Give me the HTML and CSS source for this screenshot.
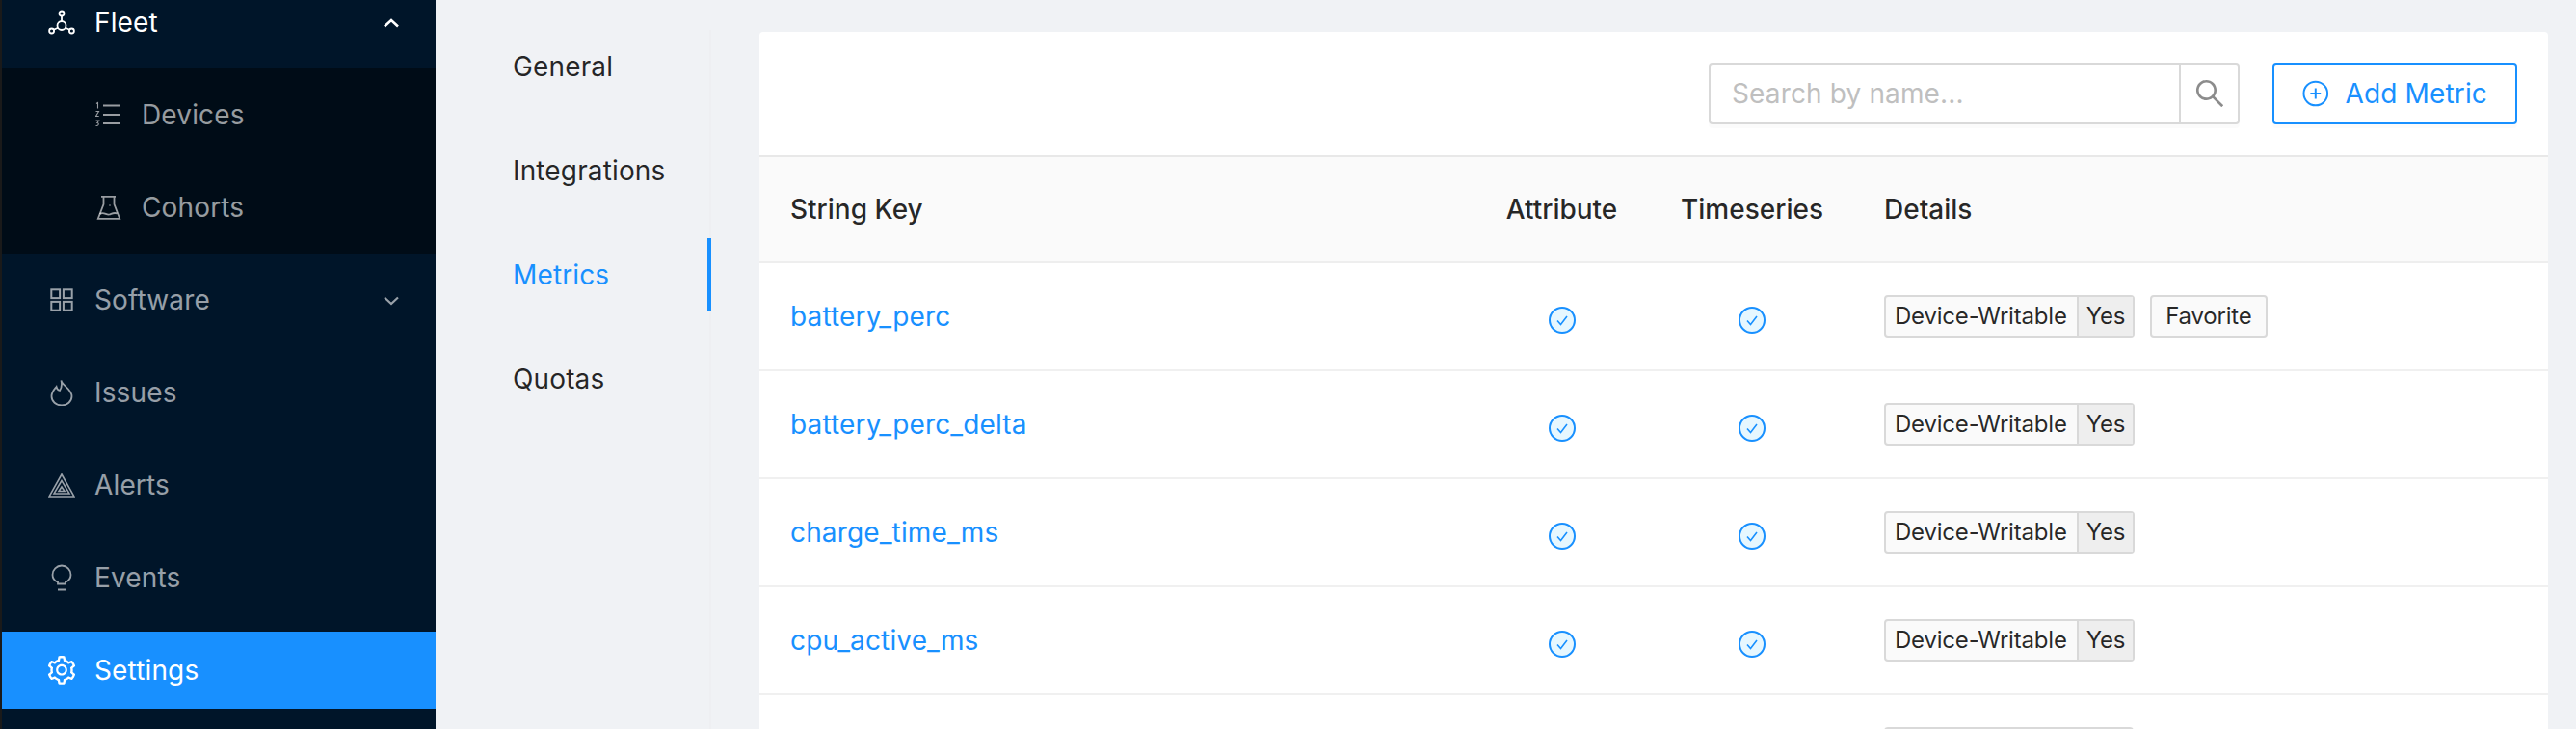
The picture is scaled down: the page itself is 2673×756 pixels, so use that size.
FILE: index.html
```html
<!DOCTYPE html>
<html lang="en">

<head>
    <meta charset="UTF-8">
    <title>Metrics</title>
    <link rel="stylesheet" href="styles.css">
</head>

<body>
    <div class="sidebar">
        <ul class="menu">
            <li class="item open">
                <svg class="ico" viewBox="0 0 28 28" fill="none" stroke="currentColor" stroke-width="1.8">
                    <circle cx="14" cy="5" r="2.5"/>
                    <circle cx="14" cy="17.5" r="4.5"/>
                    <circle cx="3.6" cy="23" r="2.5"/>
                    <circle cx="24.4" cy="23" r="2.5"/>
                    <path d="M14 7.5v5.500M10 19.800l-4.200 2M18 19.800l4.200 2"/>
                </svg>
                <span>Fleet</span>
                <svg class="arrow" viewBox="0 0 16 10" fill="none" stroke="currentColor" stroke-width="2.600"><path d="M1 8.500l7-6.500 7 6.500"/></svg>
            </li>
            <li>
                <ul class="sub">
                    <li class="item">
                        <svg class="ico" viewBox="0 0 28 28" fill="none" stroke="currentColor" stroke-width="1.800">
                            <path d="M8 4.500h18M8 14h18M8 23h18"/>
                            <path stroke-width="1.100" d="M1 2.500l1.500-1v6M.500 10.500h3l-3 5h3.200M.500 20h3.200l-1.800 2.500c2 0 2 3.500-1.400 3"/>
                        </svg>
                        <span>Devices</span>
                    </li>
                    <li class="item">
                        <svg class="ico" viewBox="0 0 28 28" fill="none" stroke="currentColor" stroke-width="1.800">
                            <path d="M6 2.800h15M8.500 2.800v8L2.800 25.800h22.400L19.500 10.800v-8"/>
                            <path d="M4.500 21c4-3 7 1.500 10 .5s5-2.500 8-1"/>
                            <circle cx="15" cy="12" r=".8" fill="currentColor" stroke="none"/>
                        </svg>
                        <span>Cohorts</span>
                    </li>
                </ul>
            </li>
            <li class="item">
                <svg class="ico" viewBox="0 0 28 28" fill="none" stroke="currentColor" stroke-width="2">
                    <rect x="3.300" y="3.300" width="8.800" height="8.800"/>
                    <rect x="15.900" y="3.300" width="8.800" height="8.800"/>
                    <rect x="3.300" y="15.900" width="8.800" height="8.800"/>
                    <rect x="15.900" y="15.900" width="8.800" height="8.800"/>
                </svg>
                <span>Software</span>
                <svg class="arrow" viewBox="0 0 16 10" fill="none" stroke="currentColor" stroke-width="2.200"><path d="M1 1.500l7 6.500 7-6.500"/></svg>
            </li>
            <li class="item">
                <svg class="ico" viewBox="0 0 28 28" fill="none" stroke="currentColor" stroke-width="1.800">
                    <path d="M13.500 1.500C14 6.500 24.500 10 24.500 18a10.500 9.500 0 0 1-21 0C3.500 13.500 6.500 10.500 8.500 8c.500 2.500 1.500 3.500 3.500 4 2-3 2.500-6.500 1.500-10.500z"/>
                </svg>
                <span>Issues</span>
            </li>
            <li class="item">
                <svg class="ico" viewBox="0 0 28 28" fill="none" stroke="currentColor" stroke-width="1.600">
                    <path d="M14 3L1 26h26z"/>
                    <path d="M14 9.500L6 23h16z"/>
                    <path d="M14 16l-3 4.500h6z"/>
                </svg>
                <span>Alerts</span>
            </li>
            <li class="item">
                <svg class="ico" viewBox="0 0 28 28" fill="none" stroke="currentColor" stroke-width="1.800">
                    <path d="M10 20.500v-1.800c-3.500-1.500-5.500-4.500-5.500-7.700a9.500 9.500 0 0 1 19 0c0 3.200-2 6.200-5.500 7.700v1.800z"/>
                    <path d="M10 26.500h8" stroke-width="2"/>
                </svg>
                <span>Events</span>
            </li>
            <li class="item active">
                <svg class="ico ico-lg" viewBox="0 0 1024 1024" fill="currentColor">
                    <path d="M924.8 625.7l-65.5-56c3.100-19 4.700-38.400 4.700-57.800s-1.600-38.800-4.700-57.800l65.500-56a32.030 32.030 0 0 0 9.300-35.200l-.9-2.600a443.740 443.740 0 0 0-79.700-137.900l-1.800-2.100a32.120 32.120 0 0 0-35.100-9.500l-81.300 28.900c-30-24.600-63.500-44-99.700-57.600l-15.700-85a32.050 32.050 0 0 0-25.800-25.700l-2.700-.5c-52.100-9.400-106.900-9.400-159 0l-2.700.5a32.050 32.050 0 0 0-25.800 25.700l-15.800 85.400a351.860 351.860 0 0 0-99 57.400l-81.900-29.100a32 32 0 0 0-35.100 9.500l-1.800 2.100a446.020 446.020 0 0 0-79.700 137.900l-.9 2.600c-4.500 12.500-.8 26.500 9.300 35.200l66.300 56.600c-3.100 18.800-4.600 38-4.600 57.100 0 19.200 1.500 38.400 4.600 57.100L99 625.500a32.030 32.030 0 0 0-9.300 35.200l.9 2.600c18.100 50.400 44.900 96.900 79.700 137.900l1.800 2.100a32.120 32.120 0 0 0 35.100 9.500l81.900-29.100c29.800 24.500 63.100 43.900 99 57.400l15.800 85.400a32.050 32.050 0 0 0 25.800 25.700l2.700.5a449.400 449.400 0 0 0 159 0l2.700-.5a32.050 32.050 0 0 0 25.800-25.700l15.700-85a350 350 0 0 0 99.700-57.600l81.300 28.900a32 32 0 0 0 35.100-9.500l1.800-2.100c34.800-41.100 61.600-87.500 79.700-137.900l.9-2.600c4.500-12.300.8-26.300-9.300-35zM788.300 465.900c2.500 15.100 3.800 30.600 3.800 46.100s-1.300 31-3.800 46.100l-6.600 40.100 74.700 63.900a370.030 370.030 0 0 1-42.600 73.600L721 702.800l-31.400 25.800c-23.900 19.600-50.500 35-79.300 45.800l-38.100 14.300-17.900 97a377.500 377.500 0 0 1-85 0l-17.900-97.200-37.800-14.500c-28.500-10.800-55-26.200-78.700-45.700l-31.400-25.900-93.400 33.200c-17-22.900-31.200-47.600-42.600-73.600l75.500-64.500-6.500-40c-2.400-14.900-3.700-30.300-3.700-45.500 0-15.300 1.200-30.600 3.700-45.500l6.500-40-75.500-64.500c11.300-26.100 25.600-50.700 42.600-73.600l93.400 33.200 31.400-25.900c23.700-19.500 50.200-34.900 78.700-45.700l37.900-14.300 17.900-97.200c28.100-3.200 56.800-3.200 85 0l17.900 97 38.100 14.300c28.700 10.800 55.400 26.200 79.300 45.800l31.400 25.800 92.800-32.900c17 22.900 31.200 47.600 42.600 73.600L781.800 426l6.500 39.900zM512 326c-97.200 0-176 78.800-176 176s78.800 176 176 176 176-78.800 176-176-78.800-176-176-176zm79.200 255.200A111.600 111.600 0 0 1 512 614c-29.900 0-58-11.700-79.200-32.800A111.600 111.600 0 0 1 400 502c0-29.900 11.700-58 32.800-79.200C454 401.600 482.100 390 512 390c29.900 0 58 11.600 79.200 32.800A111.600 111.600 0 0 1 624 502c0 29.900-11.700 58-32.800 79.200z"/>
                </svg>
                <span>Settings</span>
            </li>
        </ul>
    </div>

    <div class="tabs">
        <a class="tab">General</a>
        <a class="tab">Integrations</a>
        <a class="tab current">Metrics</a>
        <a class="tab">Quotas</a>
    </div>

    <div class="card">
        <div class="toolbar">
            <div class="search">
                <input type="text" placeholder="Search by name...">
                <span class="search-btn">
                    <svg viewBox="0 0 1024 1024" fill="currentColor"><path d="M909.600 854.500L649.900 594.800C690.200 542.700 712 479 712 412c0-80.200-31.300-155.400-87.900-212.100-56.600-56.700-132-87.900-212.100-87.900s-155.500 31.300-212.100 87.900C143.200 256.500 112 331.800 112 412c0 80.100 31.300 155.500 87.900 212.100C256.500 680.800 331.800 712 412 712c67 0 130.600-21.800 182.700-62l259.700 259.600a8.200 8.200 0 0 0 11.600 0l43.600-43.500a8.200 8.200 0 0 0 0-11.600zM570.400 570.400C528 612.700 471.800 636 412 636s-116-23.300-158.400-65.600C211.300 528 188 471.800 188 412s23.300-116.100 65.600-158.400C296 211.300 352.200 188 412 188s116.100 23.200 158.400 65.600S636 352.200 636 412s-23.300 116.100-65.600 158.400z"/></svg>
                </span>
            </div>
            <button class="add-btn">
                <svg viewBox="0 0 28 28" fill="none" stroke="currentColor" stroke-width="2"><circle cx="14" cy="14" r="12.500"/><path d="M14 8.500v11M8.500 14h11"/></svg>
                <span>Add Metric</span>
            </button>
        </div>

        <table class="metrics">
            <thead>
                <tr>
                    <th class="c-key">String Key</th>
                    <th class="c-attr">Attribute</th>
                    <th class="c-time">Timeseries</th>
                    <th class="c-det">Details</th>
                </tr>
            </thead>
            <tbody>
                <tr>
                    <td><a class="key">battery_perc</a></td>
                    <td class="mid"><svg class="check" viewBox="0 0 28 28"><circle cx="14" cy="14" r="13"/><path d="M9 14.500l3.500 4 6.500-8.500"/></svg></td>
                    <td class="mid"><svg class="check" viewBox="0 0 28 28"><circle cx="14" cy="14" r="13"/><path d="M9 14.500l3.500 4 6.500-8.500"/></svg></td>
                    <td>
                        <div class="tags">
                            <span class="tag"><span class="tag-name">Device-Writable</span><span class="tag-val">Yes</span></span>
                            <span class="tag"><span class="tag-name tag-solo">Favorite</span></span>
                        </div>
                    </td>
                </tr>
                <tr>
                    <td><a class="key">battery_perc_delta</a></td>
                    <td class="mid"><svg class="check" viewBox="0 0 28 28"><circle cx="14" cy="14" r="13"/><path d="M9 14.500l3.500 4 6.500-8.500"/></svg></td>
                    <td class="mid"><svg class="check" viewBox="0 0 28 28"><circle cx="14" cy="14" r="13"/><path d="M9 14.500l3.500 4 6.500-8.500"/></svg></td>
                    <td><div class="tags"><span class="tag"><span class="tag-name">Device-Writable</span><span class="tag-val">Yes</span></span></div></td>
                </tr>
                <tr>
                    <td><a class="key">charge_time_ms</a></td>
                    <td class="mid"><svg class="check" viewBox="0 0 28 28"><circle cx="14" cy="14" r="13"/><path d="M9 14.500l3.500 4 6.500-8.500"/></svg></td>
                    <td class="mid"><svg class="check" viewBox="0 0 28 28"><circle cx="14" cy="14" r="13"/><path d="M9 14.500l3.500 4 6.500-8.500"/></svg></td>
                    <td><div class="tags"><span class="tag"><span class="tag-name">Device-Writable</span><span class="tag-val">Yes</span></span></div></td>
                </tr>
                <tr>
                    <td><a class="key">cpu_active_ms</a></td>
                    <td class="mid"><svg class="check" viewBox="0 0 28 28"><circle cx="14" cy="14" r="13"/><path d="M9 14.500l3.500 4 6.500-8.500"/></svg></td>
                    <td class="mid"><svg class="check" viewBox="0 0 28 28"><circle cx="14" cy="14" r="13"/><path d="M9 14.500l3.500 4 6.500-8.500"/></svg></td>
                    <td><div class="tags"><span class="tag"><span class="tag-name">Device-Writable</span><span class="tag-val">Yes</span></span></div></td>
                </tr>
                <tr>
                    <td></td>
                    <td></td>
                    <td></td>
                    <td><div class="tags"><span class="tag tag-stub"></span></div></td>
                </tr>
            </tbody>
        </table>
    </div>
</body>

</html>
```

FILE: styles.css
```css
* {
    box-sizing: border-box;
}

html,
body {
    height: 100%;
    overflow: hidden;
}

body {
    margin: 0;
    display: flex;
    background-color: #f0f2f5;
    color: rgba(0, 0, 0, 0.85);
    font-family: Inter, "Liberation Sans", sans-serif;
    font-size: 28px;
    letter-spacing: 0.14px;
}

ul {
    list-style: none;
    margin: 0;
    padding: 0;
}

.sidebar {
    flex: 0 0 452px;
    background-color: #001529;
    border-left: 2px solid #1a1a1a;
    color: rgba(255, 255, 255, 0.6);
}

.menu {
    margin-top: -17px;
}

.item {
    display: flex;
    align-items: center;
    height: 80px;
    margin: 8px 0 16px;
    padding-left: 48px;
    position: relative;
}

.menu > .item:first-child {
    margin: 0 0 8px;
}

.item.open {
    color: #fff;
}

.item.active {
    background-color: #1890ff;
    color: #fff;
}

.sub {
    background-color: #000c17;
    padding: 8px 0;
    margin-bottom: 8px;
}

.sub .item {
    margin: 0 0 16px;
    padding-left: 97px;
}

.sub .item:last-child {
    margin-bottom: 0;
}

.ico {
    width: 28px;
    height: 28px;
    margin-right: 20px;
    flex-shrink: 0;
}

.ico-lg {
    width: 34px;
    height: 34px;
    margin: 0 17px 0 -3px;
}

.arrow {
    width: 16px;
    height: 10px;
    position: absolute;
    left: 396px;
    top: 36px;
}

.tabs {
    flex: 0 0 286px;
    margin-top: 31px;
    border-right: 2px solid #eeeff2;
}

.tab {
    display: flex;
    align-items: center;
    height: 76px;
    margin-bottom: 32px;
    padding-left: 80px;
    margin-right: -2px;
    border-right: 4px solid transparent;
}

.tab.current {
    color: #1890ff;
    border-right-color: #1890ff;
}

.card {
    flex: 0 0 1856px;
    height: 723px;
    overflow: hidden;
    margin: 33px 0 0 50px;
    background-color: #fff;
    border-radius: 4px 4px 0 0;
}

.toolbar {
    display: flex;
    justify-content: flex-end;
    gap: 34px;
    padding: 32px;
    border-bottom: 2px solid #e8e8e8;
}

.search {
    display: flex;
    width: 551px;
    height: 64px;
    border: 2px solid #d9d9d9;
    border-radius: 4px;
    box-shadow: 0 4px 0 rgba(0, 0, 0, 0.015);
}

.search input {
    flex: 1;
    min-width: 0;
    border: none;
    outline: none;
    padding: 0 22px;
    background: transparent;
    font-family: inherit;
    font-size: 28px;
    letter-spacing: 0.14px;
}

.search input::placeholder {
    color: #bfbfbf;
}

.search-btn {
    flex: 0 0 61px;
    display: flex;
    align-items: center;
    justify-content: center;
    border-left: 2px solid #d9d9d9;
    color: rgba(0, 0, 0, 0.45);
}

.search-btn svg {
    width: 36px;
    height: 36px;
}

.add-btn {
    display: flex;
    align-items: center;
    gap: 17px;
    height: 64px;
    width: 254px;
    padding: 0 29px;
    background-color: #fff;
    border: 2px solid #1890ff;
    border-radius: 4px;
    color: #1890ff;
    font-family: inherit;
    font-size: 28px;
    letter-spacing: 0.14px;
    white-space: nowrap;
    box-shadow: 0 4px 0 rgba(0, 0, 0, 0.015);
}

.add-btn svg {
    width: 28px;
    height: 28px;
}

.metrics {
    width: 100%;
    table-layout: fixed;
    border-collapse: separate;
    border-spacing: 0;
}

.metrics th {
    height: 110px;
    padding: 0 32px;
    background-color: #fafafa;
    border-bottom: 2px solid #eeeeee;
    font-weight: 500;
    letter-spacing: 0;
    text-align: left;
}

.metrics td {
    height: 112px;
    padding: 0 32px;
    border-bottom: 2px solid #f0f0f0;
}

.c-key {
    width: 740px;
}

.c-attr {
    width: 185px;
}

.c-time {
    width: 210px;
}

.metrics .c-attr,
.metrics .c-time,
.metrics .mid {
    padding: 0;
    text-align: center;
}

.key {
    color: #1890ff;
}

.check {
    display: inline-block;
    vertical-align: middle;
    width: 28px;
    height: 28px;
    margin-top: 6px;
    fill: #e6f7ff;
    stroke: #1890ff;
    stroke-width: 2;
}

.check path {
    fill: none;
    stroke-width: 1.6;
}

.tags {
    display: flex;
    gap: 16px;
}

.tag {
    display: flex;
    height: 44px;
    border: 2px solid #d9d9d9;
    border-radius: 4px;
    background-color: #fafafa;
    font-size: 24px;
    line-height: 40px;
    letter-spacing: -0.2px;
}

.tag-name {
    padding: 0 10px 0 9px;
}

.tag-solo {
    padding: 0 14px;
}

.tag-val {
    padding: 0 8px;
    background-color: #eeeeee;
    border-left: 2px solid #d9d9d9;
}

.tag-stub {
    width: 259px;
}
```
